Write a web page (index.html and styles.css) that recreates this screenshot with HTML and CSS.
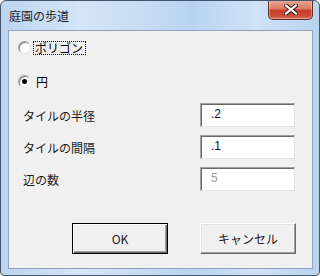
FILE: index.html
```html
<!DOCTYPE html>
<html lang="ja">
<head>
    <meta charset="UTF-8">
    <meta name="viewport" content="width=device-width, initial-scale=1.0">
    <title>庭園の歩道</title>
    <link rel="stylesheet" href="styles.css">
</head>
<body>
    <div class="window">
        <div class="titlebar">
            <span class="title">庭園の歩道</span>
            <button class="close-btn" aria-label="閉じる">
                <svg width="14" height="11" viewBox="0 0 14 11">
                    <path d="M2 1.5 L12 9.5 M12 1.5 L2 9.5" stroke="#3a1c16" stroke-width="4.2" stroke-linecap="square"/>
                    <path d="M2 1.5 L12 9.5 M12 1.5 L2 9.5" stroke="#ffffff" stroke-width="2.2" stroke-linecap="square"/>
                </svg>
            </button>
        </div>

        <div class="client">
            <!-- Shape choice -->
            <div class="options">
                <label class="radio-row first">
                    <span class="radio"></span>
                    <span class="radio-text focused">ポリゴン</span>
                </label>
                <label class="radio-row second">
                    <span class="radio checked"></span>
                    <span class="radio-text">円</span>
                </label>
            </div>

            <!-- Parameters -->
            <div class="fields">
                <span class="field-label">タイルの半径</span>
                <div class="textbox">.2</div>
                <span class="field-label">タイルの間隔</span>
                <div class="textbox">.1</div>
                <span class="field-label">辺の数</span>
                <div class="textbox disabled">5</div>
            </div>

            <div class="buttons">
                <button class="btn default">OK</button>
                <button class="btn">キャンセル</button>
            </div>
        </div>
    </div>
</body>
</html>
```

FILE: styles.css
```css
body {
    margin: 0;
    font-family: "Noto Sans CJK JP", "Noto Sans", sans-serif;
    font-size: 12px;
    color: #000;
    background: #fff;
}
.window {
    width: 320px;
    height: 276px;
    box-sizing: border-box;
    border: 1px solid #44566b;
    border-radius: 6px 6px 4px 4px;
    background: linear-gradient(90deg, #bcd4ee 0%, #d3e5f7 25%, #c7dcf2 45%, #b9d3ef 60%, #cfe2f6 80%, #bad3ee 100%);
    display: flex;
    flex-direction: column;
    overflow: hidden;
}
.titlebar {
    height: 29px;
    display: flex;
    justify-content: space-between;
    align-items: flex-start;
    padding-left: 8px;
    padding-right: 6px;
}
.title {
    margin-top: 7px;
    line-height: 16px;
    font-size: 12px;
    color: #1e1e1e;
}
.close-btn {
    width: 45px;
    height: 20px;
    margin-top: -1px;
    padding: 0;
    border: 1px solid #5c2f28;
    border-top: none;
    border-radius: 0 0 5px 5px;
    background: linear-gradient(180deg, #e9a99a 0%, #dc7c66 45%, #c7402a 55%, #c94f37 85%, #d8735c 100%);
    box-shadow: inset 0 0 0 1px rgba(255,255,255,0.35);
    display: flex;
    align-items: center;
    justify-content: center;
}
.client {
    flex: 1;
    margin: 0 6px 6px 7px;
    border: 1px solid #8fa4c0;
    background: #f0f0f0;
}
.options {
    padding-left: 9px;
}
.radio-row {
    display: flex;
    align-items: center;
    height: 13px;
}
.radio-row.first {
    margin-top: 10px;
}
.radio-row.second {
    margin-top: 21px;
}
.radio {
    width: 11px;
    height: 11px;
    border-radius: 50%;
    border: 1px solid #a0a0a0;
    border-right-color: #e3e3e3;
    border-bottom-color: #e3e3e3;
    background: #fff;
    box-shadow: inset 1px 1px 0 #8a8a8a;
    position: relative;
}
.radio.checked::after {
    content: "";
    position: absolute;
    left: 3px;
    top: 3px;
    width: 5px;
    height: 5px;
    border-radius: 50%;
    background: #000;
}
.radio-text {
    margin-left: 4px;
    line-height: 12px;
    padding: 0 1px;
}
.radio-text.focused {
    border: 1px dotted #000;
    padding: 0 2px 0 1px;
    margin-left: 2px;
}
.fields {
    display: grid;
    grid-template-columns: 191px 95px;
    grid-auto-rows: 24px;
    row-gap: 8px;
    margin-top: 15px;
    align-items: center;
}
.field-label {
    padding-left: 14px;
    color: #1a1a1a;
}
.textbox {
    height: 24px;
    box-sizing: border-box;
    border: 1px solid #a0a0a0;
    border-right-color: #e3e3e3;
    border-bottom-color: #e3e3e3;
    box-shadow: inset 1px 1px 0 #696969;
    background: #fff;
    padding-left: 10px;
    line-height: 21px;
    color: #0a0a3c;
    font-family: "Liberation Sans", sans-serif;
    font-size: 12px;
}
.textbox.disabled {
    color: #9a9a9a;
}
.buttons {
    display: flex;
    margin-top: 32px;
    padding-left: 63px;
    gap: 32px;
}
.btn {
    width: 96px;
    height: 31px;
    font-family: "Noto Sans CJK JP", "Noto Sans", sans-serif;
    font-size: 12px;
    color: #1a1a1a;
    background: #f0f0f0;
    border: 1px solid #fff;
    border-right-color: #696969;
    border-bottom-color: #696969;
    box-shadow: inset -1px -1px 0 #a0a0a0, inset 1px 1px 0 #e3e3e3;
    padding: 0;
}
.btn.default {
    border: 1px solid #000;
    box-shadow: inset 1px 1px 0 #fff, inset -1px -1px 0 #696969, inset -2px -2px 0 #a0a0a0;
}
```
